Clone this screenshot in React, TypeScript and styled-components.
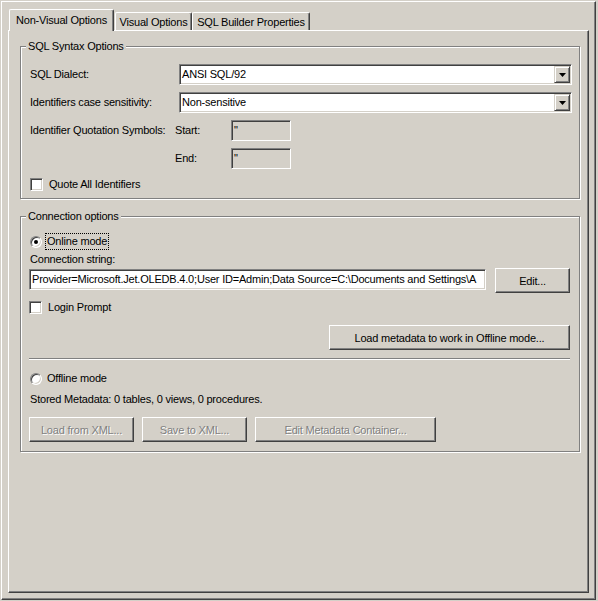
import React from "react";
import styled, { createGlobalStyle, css } from "styled-components";

const GlobalStyle = createGlobalStyle`
  html, body { margin: 0; padding: 0; background: #d4d0c8; }
  body {
    font-family: "Liberation Sans", Arial, sans-serif;
    font-size: 11px;
    line-height: 13px;
    color: #000;
    letter-spacing: -0.2px;
  }
  * { box-sizing: border-box; }
`;

const sunken = css`
  border: 1px solid;
  border-color: #808080 #fff #fff #808080;
  box-shadow: inset 1px 1px 0 #404040, inset -1px -1px 0 #d4d0c8;
`;

const raised = css`
  border: 1px solid;
  border-color: #fff #404040 #404040 #fff;
  box-shadow: inset -1px -1px 0 #808080;
`;

const Window = styled.div`
  width: 598px;
  height: 601px;
  padding: 1px 2px 1px 1px;
  display: flex;
  background: #d4d0c8;
`;

const Frame = styled.div`
  flex: 1;
  display: flex;
  flex-direction: column;
  border: 1px solid;
  border-color: #fff #404040 #404040 #fff;
  box-shadow: inset -1px -1px 0 #808080;
  padding: 7px 6px 6px 6px;
`;

const TabStrip = styled.div`
  display: flex;
  align-items: flex-end;
  height: 22px;
  margin-bottom: -1px;
  padding-left: 1px;
  position: relative;
  z-index: 1;
`;

const Tab = styled.div<{ $active?: boolean; $w: number }>`
  width: ${(p) => p.$w}px;
  height: ${(p) => (p.$active ? 22 : 18)}px;
  margin-bottom: ${(p) => (p.$active ? 0 : 1)}px;
  margin-right: ${(p) => (p.$active ? 1 : 0)}px;
  padding-top: ${(p) => (p.$active ? 0 : 2)}px;
  background: #d4d0c8;
  border-top: 1px solid #fff;
  border-left: 1px solid #fff;
  border-right: 1px solid #404040;
  box-shadow: inset -1px 0 0 #808080;
  border-radius: 2px 2px 0 0;
  display: flex;
  align-items: center;
  justify-content: center;
  white-space: nowrap;
`;

const Page = styled.div`
  flex: 1;
  border: 1px solid;
  border-color: #fff #404040 #404040 #fff;
  box-shadow: inset -1px -1px 0 #808080;
  padding: 0 8px 0 11px;
  display: flex;
  flex-direction: column;
`;

const Group = styled.div<{ $mt: number; $pad: string }>`
  position: relative;
  margin-top: ${(p) => p.$mt}px;
  border: 1px solid #808080;
  box-shadow: inset 1px 1px 0 #fff, 1px 1px 0 #fff;
  padding: ${(p) => p.$pad};
  display: flex;
  flex-direction: column;
`;

const GroupTitle = styled.div`
  position: absolute;
  top: -7px;
  left: 5px;
  padding: 0 2px;
  height: 13px;
  background: #d4d0c8;
  white-space: nowrap;
`;

const SyntaxRows = styled.div`
  display: flex;
  flex-direction: column;
  gap: 7px;
`;

const DialectRow = styled.div`
  display: grid;
  grid-template-columns: 149px 1fr;
  align-items: center;
  height: 21px;
`;

const QuoteRow = styled.div`
  display: grid;
  grid-template-columns: 145px 56px 60px;
  align-items: center;
  height: 21px;
`;

const FieldLabel = styled.span`
  white-space: nowrap;
`;

const Combo = styled.div`
  ${sunken};
  height: 21px;
  background: #fff;
  padding: 1px;
  display: flex;
`;

const ComboValue = styled.div`
  flex: 1;
  padding-left: 1px;
  display: flex;
  align-items: center;
  white-space: nowrap;
  overflow: hidden;
`;

const ComboButton = styled.div`
  width: 16px;
  height: 17px;
  border: 1px solid;
  border-color: #d4d0c8 #404040 #404040 #d4d0c8;
  box-shadow: inset 1px 1px 0 #fff, inset -1px -1px 0 #808080;
  background: #d4d0c8;
  display: flex;
  align-items: center;
  justify-content: center;
`;

const TextBox = styled.div<{ $disabled?: boolean; $grow?: boolean }>`
  ${sunken};
  height: 21px;
  flex: ${(p) => (p.$grow ? 1 : "none")};
  min-width: 0;
  background: ${(p) => (p.$disabled ? "#d4d0c8" : "#fff")};
  padding: 0 2px;
  display: flex;
  align-items: center;
  white-space: nowrap;
  overflow: hidden;
`;

const CheckRow = styled.label<{ $mt?: number }>`
  display: flex;
  align-items: center;
  gap: 6px;
  height: 17px;
  margin-top: ${(p) => p.$mt ?? 0}px;
`;

const CheckBox = styled.span`
  ${sunken};
  width: 13px;
  height: 13px;
  background: #fff;
  flex: none;
`;

const RadioRow = styled.label<{ $mt?: number }>`
  display: flex;
  align-items: center;
  height: 17px;
  margin-top: ${(p) => p.$mt ?? 0}px;
`;

const Radio = styled.span<{ $checked?: boolean }>`
  position: relative;
  width: 12px;
  height: 12px;
  margin-left: 1px;
  flex: none;
  border-radius: 50%;
  background: #fff;
  border: 1px solid;
  border-color: #808080 #fff #fff #808080;
  box-shadow: inset 1px 1px 0 #404040, inset -1px -1px 0 #d4d0c8;
  ${(p) =>
    p.$checked &&
    css`
      &::after {
        content: "";
        position: absolute;
        left: 3px;
        top: 3px;
        width: 4px;
        height: 4px;
        border-radius: 50%;
        background: #000;
      }
    `}
`;

const RadioLabel = styled.span<{ $focused?: boolean }>`
  margin-left: 3px;
  height: 17px;
  padding: 0 1px;
  display: flex;
  align-items: center;
  border: 1px dotted ${(p) => (p.$focused ? "#000" : "transparent")};
`;

const PlainLabel = styled.div<{ $mt?: number }>`
  margin-top: ${(p) => p.$mt ?? 0}px;
  padding-left: 1px;
  height: 13px;
  white-space: nowrap;
`;

const ConnRow = styled.div<{ $mt?: number }>`
  margin-top: ${(p) => p.$mt ?? 0}px;
  display: flex;
  align-items: flex-start;
  gap: 9px;
  height: 25px;
  & > ${TextBox} {
    margin-top: 1px;
  }
`;

const RightRow = styled.div<{ $mt?: number }>`
  margin-top: ${(p) => p.$mt ?? 0}px;
  display: flex;
  justify-content: flex-end;
`;

const ButtonRow = styled.div<{ $mt?: number }>`
  margin-top: ${(p) => p.$mt ?? 0}px;
  display: flex;
  gap: 8px;
`;

const Separator = styled.div<{ $mt?: number }>`
  margin-top: ${(p) => p.$mt ?? 0}px;
  height: 2px;
  border-top: 1px solid #808080;
  border-bottom: 1px solid #fff;
`;

const PushButton = styled.button<{ $w: number }>`
  ${raised};
  width: ${(p) => p.$w}px;
  height: 25px;
  padding: 1px 0 0 0;
  margin: 0;
  background: #d4d0c8;
  font: inherit;
  letter-spacing: inherit;
  color: #000;
  white-space: nowrap;
  border-radius: 0;
  &:disabled {
    color: #808080;
    text-shadow: 1px 1px 0 #fff;
  }
`;

const DropArrow = () => (
  <svg width="7" height="4" viewBox="0 0 7 4" style={{ display: "block" }}>
    <polygon points="0,0 7,0 3.5,4" fill="#000" />
  </svg>
);

export default function App() {
  return (
    <>
      <GlobalStyle />
      <Window>
        <Frame>
          <TabStrip>
            <Tab $active $w={105}>Non-Visual Options</Tab>
            <Tab $w={77}>Visual Options</Tab>
            <Tab $w={118}>SQL Builder Properties</Tab>
          </TabStrip>
          <Page>
            <Group $mt={15} $pad="17px 7px 5px 9px">
              <GroupTitle>SQL Syntax Options</GroupTitle>
              <SyntaxRows>
                <DialectRow>
                  <FieldLabel>SQL Dialect:</FieldLabel>
                  <Combo>
                    <ComboValue>ANSI SQL/92</ComboValue>
                    <ComboButton>
                      <DropArrow />
                    </ComboButton>
                  </Combo>
                </DialectRow>
                <DialectRow>
                  <FieldLabel>Identifiers case sensitivity:</FieldLabel>
                  <Combo>
                    <ComboValue>Non-sensitive</ComboValue>
                    <ComboButton>
                      <DropArrow />
                    </ComboButton>
                  </Combo>
                </DialectRow>
                <QuoteRow>
                  <FieldLabel>Identifier Quotation Symbols:</FieldLabel>
                  <FieldLabel>Start:</FieldLabel>
                  <TextBox $disabled>"</TextBox>
                </QuoteRow>
                <QuoteRow>
                  <span />
                  <FieldLabel>End:</FieldLabel>
                  <TextBox $disabled>"</TextBox>
                </QuoteRow>
                <CheckRow>
                  <CheckBox />
                  <span>Quote All Identifiers</span>
                </CheckRow>
              </SyntaxRows>
            </Group>

            <Group $mt={17} $pad="16px 9px 9px 8px">
              <GroupTitle>Connection options</GroupTitle>
              <RadioRow>
                <Radio $checked />
                <RadioLabel $focused>Online mode</RadioLabel>
              </RadioRow>
              <PlainLabel $mt={3}>Connection string:</PlainLabel>
              <ConnRow $mt={2}>
                <TextBox $grow>
                  {"Provider=Microsoft.Jet.OLEDB.4.0;User ID=Admin;Data Source=C:\\Documents and Settings\\A"}
                </TextBox>
                <PushButton $w={75}>Edit...</PushButton>
              </ConnRow>
              <CheckRow $mt={6}>
                <CheckBox />
                <span>Login Prompt</span>
              </CheckRow>
              <RightRow $mt={9}>
                <PushButton $w={241}>Load metadata to work in Offline mode...</PushButton>
              </RightRow>
              <Separator $mt={8} />
              <RadioRow $mt={10}>
                <Radio />
                <RadioLabel>Offline mode</RadioLabel>
              </RadioRow>
              <PlainLabel $mt={6}>Stored Metadata: 0 tables, 0 views, 0 procedures.</PlainLabel>
              <ButtonRow $mt={11}>
                <PushButton $w={105} disabled>
                  Load from XML...
                </PushButton>
                <PushButton $w={105} disabled>
                  Save to XML...
                </PushButton>
                <PushButton $w={181} disabled>
                  Edit Metadata Container...
                </PushButton>
              </ButtonRow>
            </Group>
          </Page>
        </Frame>
      </Window>
    </>
  );
}
